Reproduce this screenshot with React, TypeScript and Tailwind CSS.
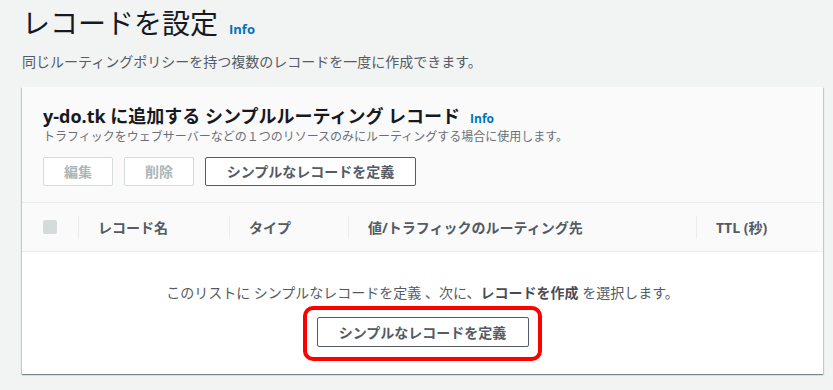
const font = {
  fontFamily: '"Open Sans", "Noto Sans CJK JP", sans-serif',
}

const columns = [
  { label: "レコード名", w: "w-[151px]" },
  { label: "タイプ", w: "w-[119px]" },
  { label: "値/トラフィックのルーティング先", w: "w-[348px]" },
  { label: "TTL (秒)", w: "flex-1" },
]

export default function App() {
  return (
    <div className="w-[833px] h-[390px] overflow-hidden bg-[#f2f3f3] text-[#16191f]" style={font}>
      <div className="pl-[22px] pr-[10px]">
        <div className="flex items-baseline gap-[11px] pt-[3px] h-[44px]">
          <h1 className="text-[28px] leading-[40px] font-normal text-[#16191f]">レコードを設定</h1>
          <a className="text-[13px] font-bold text-[#0073bb]">Info</a>
        </div>
        <p className="text-[14px] leading-[20px] text-[#545b64] mt-[8px]">
          同じルーティングポリシーを持つ複数のレコードを一度に作成できます。
        </p>

        <div className="mt-[15px] bg-white shadow-[0_1px_1px_0_rgba(0,28,36,0.3),1px_1px_1px_0_rgba(0,28,36,0.15),-1px_1px_1px_0_rgba(0,28,36,0.15)]">
          <div className="bg-[#fafafa] border-b border-[#eaeded] px-[21px] pt-[16px] pb-[16px]">
            <div className="flex items-baseline gap-[10px]">
              <h2 className="text-[18px] leading-[26px] font-bold text-[#16191f]">
                y-do.tk に追加する シンプルルーティング レコード
              </h2>
              <a className="text-[12px] font-bold text-[#0073bb]">Info</a>
            </div>
            <p className="text-[12px] leading-[16px] text-[#687078]">
              トラフィックをウェブサーバーなどの１つのリソースのみにルーティングする場合に使用します。
            </p>
            <div className="flex gap-[11px] mt-[12px]">
              <button className="w-[70px] h-[29px] border border-[#d5dbdb] rounded-[2px] bg-white text-[14px] font-bold text-[#aab7b8]">
                編集
              </button>
              <button className="w-[70px] h-[29px] border border-[#d5dbdb] rounded-[2px] bg-white text-[14px] font-bold text-[#aab7b8]">
                削除
              </button>
              <button className="w-[211px] h-[29px] border border-[#545b64] rounded-[2px] bg-white text-[14px] font-bold text-[#545b64]">
                シンプルなレコードを定義
              </button>
            </div>
          </div>

          <div className="flex items-center h-[49px] bg-[#fafafa] border-b border-[#eaeded] text-[14px] font-bold text-[#545b64]">
            <div className="w-[56px] pl-[21px] flex items-center">
              <span className="w-[14px] h-[14px] rounded-[2px] bg-[#d5dbdb]" />
            </div>
            {columns.map((c) => (
              <div key={c.label} className={`${c.w} h-[23px] border-l border-[#eaeded] pl-[19px] flex items-center`}>
                {c.label}
              </div>
            ))}
          </div>

          <div className="flex flex-col items-center pt-[31px] pb-[27px]">
            <p className="text-[14px] leading-[20px] text-[#545b64]">
              このリストに シンプルなレコードを定義 、次に、<b className="text-[#16191f]/80">レコードを作成</b> を選択します。
            </p>
            <div className="relative mt-[14px]">
              <button className="w-[212px] h-[30px] border border-[#545b64] rounded-[2px] bg-white text-[14px] font-bold text-[#545b64]">
                シンプルなレコードを定義
              </button>
              <div className="absolute -left-[14px] -right-[13px] -top-[11px] -bottom-[14px] border-[4px] border-[#ff0000] rounded-[10px]" />
            </div>
          </div>
        </div>
      </div>
    </div>
  )
}
